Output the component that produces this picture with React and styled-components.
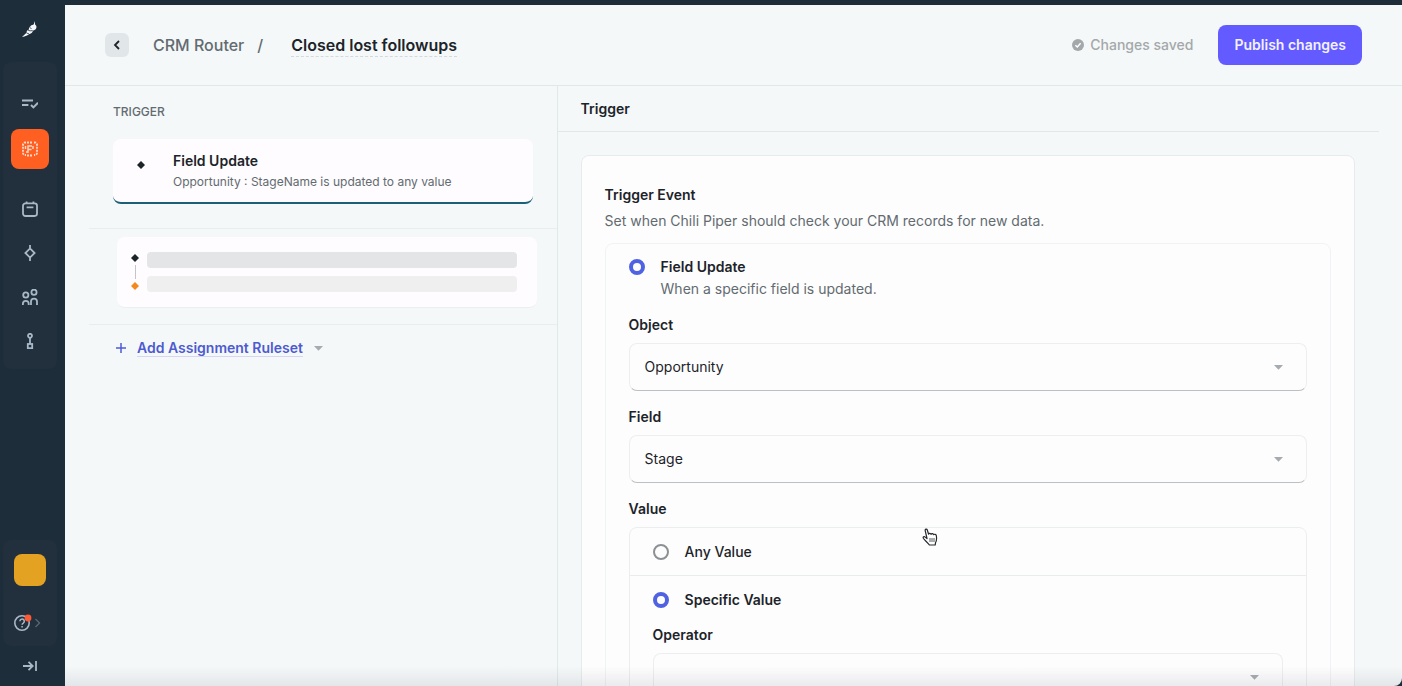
import React, { useState } from "react";
import styled, { createGlobalStyle } from "styled-components";

const GlobalStyle = createGlobalStyle`
  * {
    box-sizing: border-box;
  }
  body {
    margin: 0;
    background: #1e2d3a;
    font-family: Inter, "Liberation Sans", sans-serif;
    font-size: 14px;
    line-height: 22px;
    color: #1c2429;
  }
  button, select, input {
    font: inherit;
    color: inherit;
  }
  h1, h2, h3, p {
    margin: 0;
  }
`;

const navItems = [
  {
    label: "Queue",
    icon: (
      <path d="M0 4.600h11M0 8.900h6.400M9 9l2.400 2.400L16 6.800" strokeWidth="2" />
    ),
  },
  {
    label: "Router",
    active: true,
    icon: (
      <>
        <path
          d="M4 1.500H3a2 2 0 0 0-2 2V12a2 2 0 0 0 2 2h1M12 1.500h1a2 2 0 0 1 2 2V12a2 2 0 0 1-2 2h-1M5 1.500h6M5 14.500h6"
          strokeDasharray="2 1"
        />
        <path d="M6 12V5h4M6 8.500h3.500M11 5v3M4 11h2M3.500 5v3" strokeWidth="1.400" />
      </>
    ),
  },
  {
    label: "Calendar",
    icon: (
      <>
        <rect x="1" y="2.400" width="14" height="12.600" rx="2.400" />
        <path d="M4.600 0.400v2M11.400 0.400v2M4.600 6.400h6.800" />
      </>
    ),
  },
  {
    label: "Concierge",
    icon: <path d="M8 3.400 12.600 8 8 12.600 3.400 8zM8 0v3.400M8 12.600V16" />,
  },
  {
    label: "Teams",
    icon: (
      <>
        <circle cx="3.800" cy="6" r="2.600" />
        <circle cx="12" cy="3.200" r="2.600" />
        <path d="M0.900 16v-1.200a2.900 2.900 0 0 1 5.800 0V16M9 16v-3.400a3 3 0 0 1 6 0V16" />
      </>
    ),
  },
  {
    label: "Workspaces",
    icon: (
      <>
        <circle cx="8" cy="2.800" r="2" />
        <rect x="5.800" y="11" width="4.400" height="4.200" />
        <path d="M8 4.800V11" />
      </>
    ),
  },
];

const Icon = ({ size = 16, children }) => (
  <svg
    width={size}
    height={size}
    viewBox="0 0 16 16"
    fill="none"
    stroke="currentColor"
    strokeWidth="1.800"
    aria-hidden="true"
  >
    {children}
  </svg>
);

const Diamond = ({ color = "#1c2429" }) => (
  <svg width="8" height="8" viewBox="0 0 8 8" aria-hidden="true">
    <path d="M4 0 8 4 4 8 0 4z" fill={color} />
  </svg>
);

const Caret = () => (
  <svg width="9" height="5" viewBox="0 0 9 5" aria-hidden="true">
    <path d="M0 0h9L4.500 4.800z" fill="#a5abae" />
  </svg>
);

const SelectField = ({ id, label, options }) => (
  <Field>
    <FieldLabel htmlFor={id}>{label}</FieldLabel>
    <SelectBox>
      <Select id={id}>
        {options.map((option) => (
          <option key={option}>{option}</option>
        ))}
      </Select>
      <Caret />
    </SelectBox>
  </Field>
);

const App = () => {
  const [valueType, setValueType] = useState("specific");

  return (
    <Shell>
      <GlobalStyle />
      <Sidebar>
        <Logo href="#" aria-label="Home">
          <svg width="16" height="16" viewBox="0 0 16 16" aria-hidden="true">
            <path
              d="M12.600 0c.5 1.400.4 2.600.6 3.800 1.400.8 1.700 2.400.8 4-.8 1.300-2 1.700-3.200 1.800.1 1.800-1.300 3.300-3.400 3.500C5.600 14.600 3.400 15.500 0 16c1.700-1.500 3.200-2.700 4.600-4.200-.2-1.400.8-2.700 2.400-3.200-.4-1.600.5-2.400 1.300-3.200.6-.9 1.400-1.500 3-1.600C12.200 2.800 12.500 1.500 12.600 0z"
              fill="#f4f7fa"
            />
            <path
              d="M8 6.300 9.400 8M6.200 9.400l2 .4 2.400-.2M4.600 12l2.400.9"
              fill="none"
              stroke="#1e2d3a"
              strokeWidth=".8"
            />
          </svg>
        </Logo>
        <NavGroup>
          {navItems.map((item) => (
            <NavItem
              href="#"
              key={item.label}
              aria-label={item.label}
              $active={item.active}
            >
              <Icon>{item.icon}</Icon>
            </NavItem>
          ))}
        </NavGroup>
        <AccountGroup>
          <Avatar aria-label="Account" />
          <HelpButton aria-label="Help">
            <svg width="28" height="20" viewBox="0 0 28 20" fill="none" aria-hidden="true">
              <circle cx="8" cy="11" r="7.200" stroke="#a9b8c6" strokeWidth="1.600" />
              <path
                d="M5.900 9.200a2.200 2.200 0 1 1 3.500 1.800c-.8.5-1.300.8-1.300 1.700M8.100 14v1.500"
                stroke="#a9b8c6"
                strokeWidth="1.500"
              />
              <circle cx="14" cy="6" r="3.400" fill="#ff5a36" />
              <path d="M21.500 7l4 4-4 4" stroke="#566674" strokeWidth="1.300" />
            </svg>
          </HelpButton>
        </AccountGroup>
        <CollapseButton aria-label="Expand sidebar">
          <Icon>
            <path d="M1 8h9.500M6.500 3.800 10.700 8l-4.200 4.200M14 3v10" />
          </Icon>
        </CollapseButton>
      </Sidebar>

      <Main>
        <Header>
          <BackButton aria-label="Back">
            <svg width="8" height="10" viewBox="0 0 8 10" fill="none" aria-hidden="true">
              <path d="M6 1 2 5l4 4" stroke="#1c2429" strokeWidth="1.800" />
            </svg>
          </BackButton>
          <Crumb href="#">CRM Router</Crumb>
          <Slash>/</Slash>
          <Title>Closed lost followups</Title>
          <SavedNote>
            <svg width="12" height="12" viewBox="0 0 12 12" aria-hidden="true">
              <circle cx="6" cy="6" r="6" fill="#a4a8aa" />
              <path d="M3.400 6.200 5.300 8l3.300-3.700" fill="none" stroke="#fff" strokeWidth="1.400" />
            </svg>
            Changes saved
          </SavedNote>
          <PublishButton>Publish changes</PublishButton>
        </Header>

        <Columns>
          <FlowColumn>
            <TriggerSection>
              <SectionLabel>TRIGGER</SectionLabel>
              <TriggerCard>
                <Diamond />
                <div>
                  <CardTitle>Field Update</CardTitle>
                  <CardText>Opportunity : StageName is updated to any value</CardText>
                </div>
              </TriggerCard>
            </TriggerSection>
            <RulesetSection>
              <RulesetCard>
                <Steps>
                  <Diamond />
                  <StepLine />
                  <Diamond color="#f28a1e" />
                </Steps>
                <Bars>
                  <Bar />
                  <Bar $light />
                </Bars>
              </RulesetCard>
            </RulesetSection>
            <AddSection>
              <AddButton>
                <svg width="10" height="10" viewBox="0 0 10 10" aria-hidden="true">
                  <path d="M5 0v10M0 5h10" stroke="#4d5bd8" strokeWidth="1.500" />
                </svg>
                <AddText>Add Assignment Ruleset</AddText>
                <Caret />
              </AddButton>
            </AddSection>
          </FlowColumn>

          <DetailColumn>
            <DetailHeading>Trigger</DetailHeading>
            <Panel>
              <PanelTitle>Trigger Event</PanelTitle>
              <Muted>Set when Chili Piper should check your CRM records for new data.</Muted>
              <EventBox>
                <EventOption>
                  <Radio type="radio" id="event-field" name="event" defaultChecked />
                  <div>
                    <OptionLabel htmlFor="event-field" $bold>
                      Field Update
                    </OptionLabel>
                    <Muted>When a specific field is updated.</Muted>
                  </div>
                </EventOption>
                <SelectField id="object" label="Object" options={["Opportunity"]} />
                <SelectField id="field" label="Field" options={["Stage"]} />
                <ValueGroup>
                  <ValueLegend>Value</ValueLegend>
                  <ValueBox>
                    <ValueRow $divided>
                      <Radio
                        type="radio"
                        id="any-value"
                        name="value"
                        checked={valueType === "any"}
                        onChange={() => setValueType("any")}
                      />
                      <OptionLabel htmlFor="any-value">Any Value</OptionLabel>
                    </ValueRow>
                    <ValueRow>
                      <Radio
                        type="radio"
                        id="specific-value"
                        name="value"
                        checked={valueType === "specific"}
                        onChange={() => setValueType("specific")}
                      />
                      <OptionLabel htmlFor="specific-value" $bold>
                        Specific Value
                      </OptionLabel>
                    </ValueRow>
                    <OperatorArea>
                      <SelectField id="operator" label="Operator" options={[""]} />
                    </OperatorArea>
                  </ValueBox>
                </ValueGroup>
              </EventBox>
            </Panel>
          </DetailColumn>
        </Columns>
        <BottomShade />
      </Main>

      <Pointer width="16" height="18" viewBox="0 0 16 18" aria-hidden="true">
        <path
          d="M5 10.500 3.200 2.600C2.900 1 4.800.4 5.300 2l1.300 4.200c.3-1.200 2.200-1.200 2.500.1.500-1 2.200-.8 2.500.4.600-.8 2.500-.5 2.700.8.500 2.700.5 5-.8 7.300l-.3 2.200H7.400C5.800 14.600 3.300 13 1.500 10.500c-1-1.500.6-2.500 1.800-1.400z"
          fill="#fff"
          stroke="#24282b"
          strokeWidth="1.200"
          strokeLinejoin="round"
        />
        <path d="M8 10v4M10 10v4M12 10v4" stroke="#55595c" />
      </Pointer>
    </Shell>
  );
};

const Shell = styled.div`
  position: relative;
  display: flex;
  height: 100vh;
  padding-top: 5px;
  overflow: hidden;
  background: #1e2d3a;
`;

const Sidebar = styled.aside`
  flex: 0 0 65px;
  display: flex;
  flex-direction: column;
  padding: 0 8px 0 3px;
`;

const Logo = styled.a`
  flex: 0 0 57px;
  display: flex;
  justify-content: center;
  padding-top: 16px;
`;

const NavGroup = styled.nav`
  display: flex;
  flex-direction: column;
  align-items: center;
  padding: 20px 0 6px;
  border-radius: 8px;
  background: #222f3c;
`;

const NavItem = styled.a`
  display: flex;
  align-items: center;
  justify-content: center;
  width: 38px;
  height: ${({ $active }) => ($active ? "40px" : "44px")};
  margin: ${({ $active }) => ($active ? "3px 0 18px" : "0")};
  border-radius: 8px;
  color: ${({ $active }) => ($active ? "#ffd9c8" : "#a9b8c6")};
  background: ${({ $active }) => ($active ? "#ff6021" : "transparent")};
`;

const AccountGroup = styled.div`
  display: flex;
  flex-direction: column;
  align-items: center;
  margin-top: auto;
  padding-top: 14px;
  border-radius: 8px;
  background: #222f3c;
`;

const Avatar = styled.button`
  width: 32px;
  height: 32px;
  margin-bottom: 16px;
  padding: 0;
  border: 0;
  border-radius: 8px;
  background: #e3a222;
`;

const HelpButton = styled.button`
  display: flex;
  align-items: center;
  justify-content: center;
  width: 100%;
  height: 44px;
  padding: 0 4px 4px 0;
  border: 0;
  background: none;
`;

const CollapseButton = styled.button`
  display: flex;
  align-items: center;
  justify-content: center;
  height: 40px;
  padding: 0;
  border: 0;
  background: none;
  color: #a9b8c6;
`;

const Main = styled.main`
  position: relative;
  flex: 1;
  min-width: 0;
  display: flex;
  flex-direction: column;
  overflow: hidden;
  border-bottom-right-radius: 8px;
  background: #f5f8f9;
`;

const Header = styled.header`
  flex: none;
  display: flex;
  align-items: center;
  padding: 20px 40px;
  border-bottom: 1px solid #e2e8ea;
`;

const BackButton = styled.button`
  display: flex;
  align-items: center;
  justify-content: center;
  width: 24px;
  height: 24px;
  margin-right: 24px;
  padding: 0;
  border: 0;
  border-radius: 6px;
  background: #e1e6e9;
`;

const Crumb = styled.a`
  font-size: 16px;
  font-weight: 500;
  color: #626b70;
  text-decoration: none;
`;

const Slash = styled.span`
  margin: 0 28px 0 13px;
  font-size: 16px;
  font-weight: 500;
  color: #626b70;
`;

const Title = styled.h1`
  font-size: 16px;
  font-weight: 600;
  line-height: 22px;
  border-bottom: 1px dashed #d3d9dc;
`;

const SavedNote = styled.span`
  display: flex;
  align-items: center;
  gap: 6px;
  margin: 0 25px 0 auto;
  font-weight: 500;
  color: #a4a8aa;
`;

const PublishButton = styled.button`
  height: 40px;
  padding: 0 16px;
  border: 0;
  border-radius: 8px;
  background: #635bff;
  color: #f3f1ff;
  font-weight: 600;
`;

const Columns = styled.div`
  flex: 1;
  min-height: 0;
  display: grid;
  grid-template-columns: 7fr 12fr;
`;

const FlowColumn = styled.section`
  padding-left: 24px;
  border-right: 1px solid #e2e8ea;
`;

const TriggerSection = styled.div`
  padding: 18px 24px 24px;
  border-bottom: 1px solid #e8edee;
`;

const SectionLabel = styled.h2`
  margin-bottom: 19px;
  font-size: 12px;
  font-weight: 500;
  line-height: 16px;
  color: #626b70;
`;

const TriggerCard = styled.div`
  display: flex;
  gap: 28px;
  padding: 11px 24px;
  border-bottom: 2px solid #1b6078;
  border-radius: 8px;
  background: #fefcfe;

  > svg {
    margin-top: 11px;
  }
`;

const CardTitle = styled.h3`
  font-size: 14px;
  font-weight: 600;
  line-height: 22px;
`;

const CardText = styled.p`
  font-size: 12px;
  line-height: 19px;
  color: #626b70;
`;

const RulesetSection = styled.div`
  padding: 8px 20px 16px 28px;
  border-bottom: 1px solid #e8edee;
`;

const RulesetCard = styled.div`
  display: flex;
  gap: 8px;
  padding: 15px 20px 15px 14px;
  border-bottom: 1px solid #eceff1;
  border-radius: 8px;
  background: #fefcfe;
`;

const Steps = styled.div`
  display: flex;
  flex-direction: column;
  align-items: center;
  justify-content: space-between;
  padding: 2px 0;
`;

const StepLine = styled.span`
  width: 1px;
  height: 14px;
  background: #c3c6c8;
`;

const Bars = styled.div`
  flex: 1;
  display: flex;
  flex-direction: column;
  gap: 8px;
`;

const Bar = styled.span`
  height: 16px;
  border-radius: 4px;
  background: ${({ $light }) => ($light ? "#efeff0" : "#e4e5e6")};
`;

const AddSection = styled.div`
  padding: 14px 27px;
`;

const AddButton = styled.button`
  display: flex;
  align-items: center;
  gap: 11px;
  padding: 0;
  border: 0;
  background: none;
`;

const AddText = styled.span`
  font-weight: 600;
  line-height: 17px;
  color: #4d5bd0;
  border-bottom: 1px solid #d6d6f2;
`;

const DetailColumn = styled.section`
  min-width: 0;
  overflow: hidden;
`;

const DetailHeading = styled.h2`
  margin-right: 23px;
  padding: 12px 23px 11px;
  border-bottom: 1px solid #e2e8ea;
  font-size: 14px;
  font-weight: 600;
  line-height: 22px;
`;

const Panel = styled.div`
  margin: 23px 47px 23px 23px;
  padding: 28px 23px 23px;
  border: 1px solid #e6ebed;
  border-radius: 8px;
  background: #fefdfe;
`;

const PanelTitle = styled.h3`
  margin-bottom: 4px;
  font-size: 14px;
  font-weight: 600;
  line-height: 22px;
`;

const Muted = styled.p`
  color: #626b70;
`;

const EventBox = styled.div`
  margin-top: 11px;
  padding: 12px 23px 23px;
  border: 1px solid #f0f2f3;
  border-radius: 8px;
`;

const EventOption = styled.div`
  display: flex;
  gap: 16px;
  margin-bottom: 14px;
`;

const Radio = styled.input`
  appearance: none;
  flex: none;
  width: 16px;
  height: 16px;
  margin: 3px 0;
  border: 2px solid #8c9194;
  border-radius: 50%;
  background: #fefdfe;

  &:checked {
    border: 4px solid #4f63e2;
  }
`;

const OptionLabel = styled.label`
  display: block;
  font-weight: ${({ $bold }) => ($bold ? 600 : 500)};
`;

const Field = styled.div`
  display: flex;
  flex-direction: column;
  gap: 7px;
  margin-bottom: 15px;
`;

const FieldLabel = styled.label`
  font-weight: 600;
`;

const SelectBox = styled.div`
  display: grid;
  align-items: center;

  > * {
    grid-area: 1 / 1;
  }
  svg {
    justify-self: end;
    margin-right: 24px;
    pointer-events: none;
  }
`;

const Select = styled.select`
  appearance: none;
  width: 100%;
  height: 48px;
  padding: 0 40px 0 15px;
  border: 1px solid #eceeef;
  border-bottom-color: #bcc0c2;
  border-radius: 8px;
  background: #fefdfe;
`;

const ValueGroup = styled.fieldset`
  margin: 0;
  padding: 0;
  border: 0;
`;

const ValueLegend = styled.legend`
  padding: 0;
  font-weight: 600;
`;

const ValueBox = styled.div`
  margin-top: 7px;
  border: 1px solid #eaeeef;
  border-radius: 8px;
`;

const ValueRow = styled.div`
  display: flex;
  align-items: center;
  gap: 16px;
  height: 48px;
  padding: 0 23px;
  border-bottom: ${({ $divided }) => ($divided ? "1px solid #e8eced" : "0")};
`;

const OperatorArea = styled.div`
  padding: 0 23px;
`;

const BottomShade = styled.div`
  position: absolute;
  right: 0;
  bottom: 0;
  left: 0;
  height: 20px;
  pointer-events: none;
  background: linear-gradient(rgba(90, 105, 115, 0), rgba(90, 105, 115, 0.12));
`;

const Pointer = styled.svg`
  position: absolute;
  top: 528px;
  left: 922px;
  pointer-events: none;
`;

export default App;
